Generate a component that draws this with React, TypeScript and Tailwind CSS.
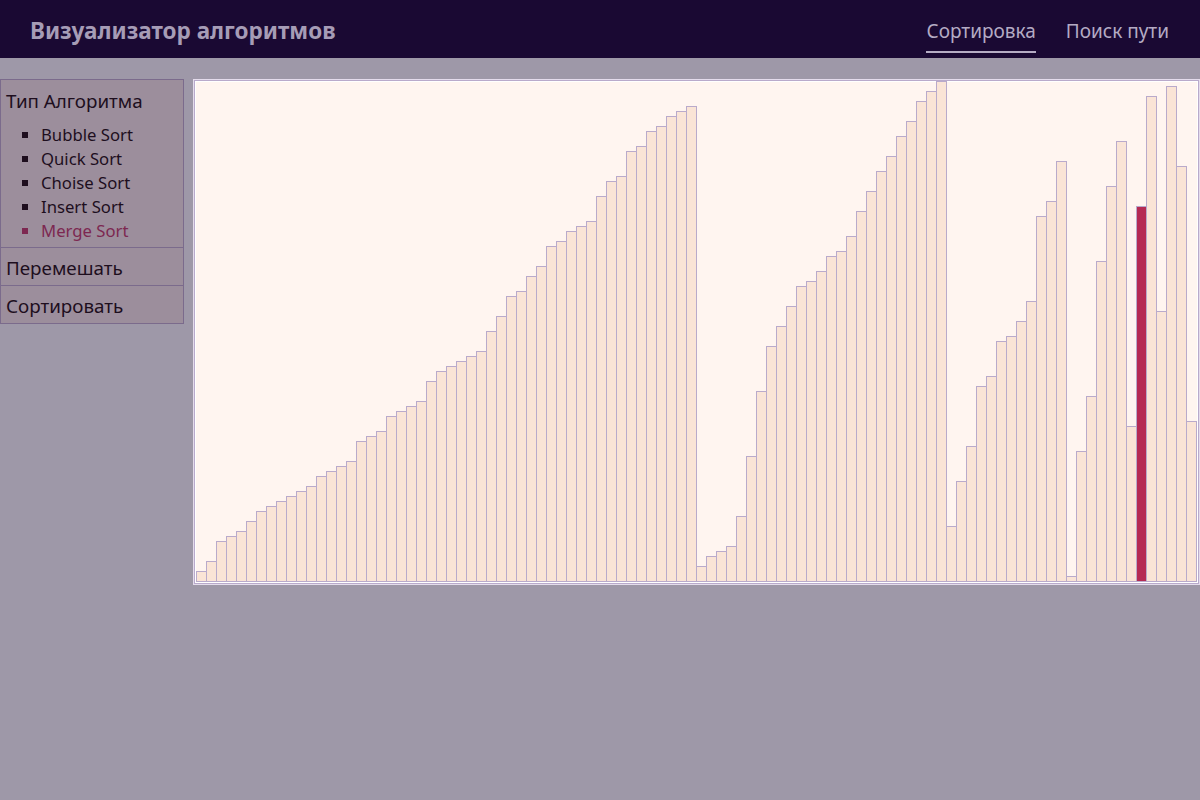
const values = [
  11, 21, 41, 46, 51, 61, 71, 76, 81, 86, 91, 96, 106, 111, 116, 121, 141, 146, 151, 166,
  171, 176, 181, 201, 211, 216, 221, 226, 231, 251, 266, 286, 291, 306, 316, 336, 341, 351, 356, 361,
  386, 401, 406, 431, 436, 451, 456, 466, 471, 476, 16, 26, 31, 36, 66, 126, 191, 236, 256, 276,
  296, 301, 311, 326, 331, 346, 371, 391, 411, 426, 446, 461, 481, 491, 501, 56, 101, 136, 196, 206,
  241, 246, 261, 281, 366, 381, 421, 6, 131, 186, 321, 396, 441, 156, 376, 486, 271, 496, 416, 161,
];

const activeIndex = 94;

const algorithms = ["Bubble Sort", "Quick Sort", "Choise Sort", "Insert Sort", "Merge Sort"];

export default function App() {
  return (
    <main
      className="min-h-screen bg-[#9e98a8] text-[#1e0e1e]"
      style={{ fontFamily: '"Noto Sans", "Open Sans", sans-serif' }}
    >
      <header className="h-[58px] bg-[#1a0933] flex items-center justify-between pl-[30px] pr-[31px]">
        <h1 className="text-[22.5px] font-bold text-[#a69cb6] pt-[4px]">Визуализатор алгоритмов</h1>
        <nav className="flex gap-[30px] text-[19px] text-[#b4abc4] self-stretch">
          <a className="flex items-center border-b-2 border-[#b5acc4] pt-[11px] mb-[5px]">Сортировка</a>
          <a className="flex items-center pt-[11px] mb-[5px] border-b-2 border-transparent">Поиск пути</a>
        </nav>
      </header>

      <div className="flex items-start pt-[21px]">
        <aside className="w-[184px] shrink-0 bg-[#9c8e9c] border border-[#7b6b8c]">
          <div className="pl-[5px] pt-[8px] pb-[4px]">
            <div className="text-[18.8px] leading-[27px]">Тип Алгоритма</div>
            <ul className="list-[square] pl-[35px] mt-[8px] text-[16.7px] leading-[24px]">
              {algorithms.map((name) => (
                <li
                  key={name}
                  className={name === "Merge Sort" ? "text-[#7d2851] marker:text-[#7d2851]" : ""}
                >
                  {name}
                </li>
              ))}
            </ul>
          </div>
          <div className="border-t border-[#7b6b8c] pl-[5px] pt-[7px] pb-[3px] text-[18.8px] leading-[27px]">Перемешать</div>
          <div className="border-t border-[#7b6b8c] pl-[5px] pt-[7px] pb-[3px] text-[18.8px] leading-[27px]">Сортировать</div>
        </aside>

        <section className="ml-[9px] border border-[#e4dcec]">
          <div className="border border-[#b9aacb] bg-white p-px">
            <div className="w-[1001px] h-[500px] bg-[#fff5f0] flex items-end">
              {values.map((v, i) => (
                <div
                  key={i}
                  className={
                    i === activeIndex
                      ? "w-[11px] shrink-0 -mr-px border border-[#b9aacb] bg-[#b52a53]"
                      : "w-[11px] shrink-0 -mr-px border border-[#b9aacb] bg-[#fae4d6]"
                  }
                  style={{ height: v }}
                />
              ))}
            </div>
          </div>
        </section>
      </div>
    </main>
  );
}
